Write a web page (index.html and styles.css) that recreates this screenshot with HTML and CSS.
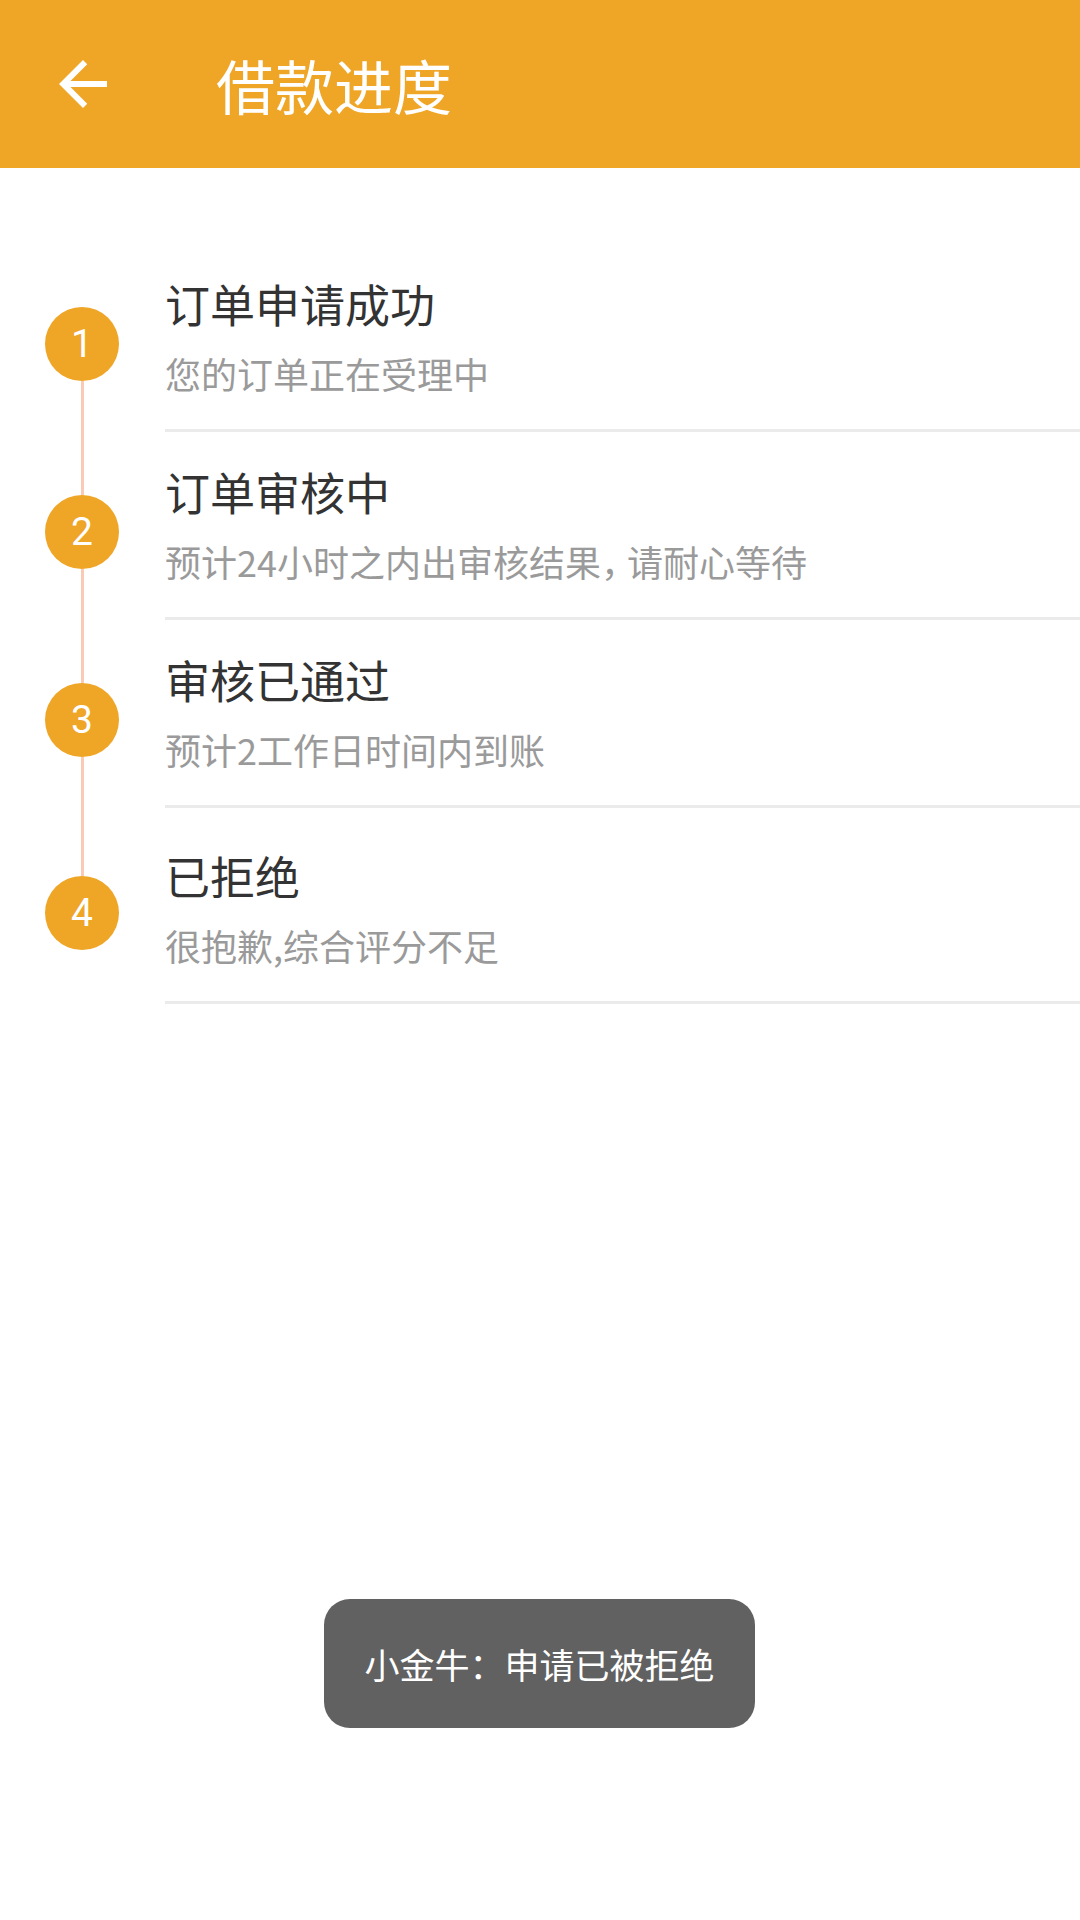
FILE: index.html
```html
<!DOCTYPE html>
<html lang="zh-CN">
<head>
    <meta charset="UTF-8">
    <meta name="viewport" content="width=device-width, initial-scale=1.0">
    <title>借款进度</title>
    <link rel="stylesheet" href="styles.css">
</head>
<body>
    <div class="toolbar">
        <svg class="back" viewBox="0 0 24 24" width="72" height="72">
            <path fill="#fff" d="M20 11H7.83l5.59-5.59L12 4l-8 8 8 8 1.41-1.41L7.83 13H20v-2z"/>
        </svg>
        <h1 class="title">借款进度</h1>
    </div>

    <div class="steps">
        <div class="step step-first">
            <div class="rail">
                <div class="line line-top"></div>
                <div class="dot">1</div>
                <div class="line line-bottom"></div>
            </div>
            <div class="info">
                <div class="step-title">订单申请成功</div>
                <div class="step-desc">您的订单正在受理中</div>
            </div>
        </div>
        <div class="step">
            <div class="rail">
                <div class="line line-top"></div>
                <div class="dot">2</div>
                <div class="line line-bottom"></div>
            </div>
            <div class="info">
                <div class="step-title">订单审核中</div>
                <div class="step-desc">预计24小时之内出审核结果<span class="comma">，</span>请耐心等待</div>
            </div>
        </div>
        <div class="step">
            <div class="rail">
                <div class="line line-top"></div>
                <div class="dot">3</div>
                <div class="line line-bottom"></div>
            </div>
            <div class="info">
                <div class="step-title">审核已通过</div>
                <div class="step-desc">预计2工作日时间内到账</div>
            </div>
        </div>
        <div class="step step-last">
            <div class="rail">
                <div class="line line-top"></div>
                <div class="dot">4</div>
                <div class="line line-bottom"></div>
            </div>
            <div class="info">
                <div class="step-title">已拒绝</div>
                <div class="step-desc">很抱歉,综合评分不足</div>
            </div>
        </div>
    </div>

    <div class="toast">小金牛：申请已被拒绝</div>
</body>
</html>
```

FILE: styles.css
```css
body {
    margin: 0;
    font-family: "Noto Sans CJK SC", Roboto, sans-serif;
    background-color: #fff;
    width: 1080px;
    height: 1920px;
    position: relative;
    overflow: hidden;
}

.toolbar {
    height: 168px;
    background-color: #efa526;
    display: flex;
    align-items: center;
}

.back {
    margin-left: 47px;
    flex: none;
}

.title {
    margin: 0 0 0 97px;
    font-size: 59px;
    font-weight: 400;
    color: #fff;
    line-height: 1;
}

.steps {
    padding-top: 76px;
}

.step {
    display: flex;
    height: 188px;
}

.step-last {
    height: 196px;
}

.rail {
    width: 165px;
    flex: none;
    display: flex;
    flex-direction: column;
    align-items: center;
    padding-right: 1px;
    box-sizing: border-box;
}

.line {
    width: 3px;
    background-color: #f9cbb6;
}

.line-top {
    height: 63px;
    flex: none;
}

.step-last .line-top {
    height: 68px;
}

.line-bottom {
    flex: 1;
}

.step-first .line-top,
.step-last .line-bottom {
    background-color: transparent;
}

.dot {
    width: 74px;
    height: 74px;
    border-radius: 50%;
    background-color: #efa526;
    color: #fff;
    font-family: Roboto, sans-serif;
    font-size: 39px;
    display: flex;
    align-items: center;
    justify-content: center;
    flex: none;
}

.info {
    flex: 1;
    box-sizing: border-box;
    border-bottom: 3px solid #ebebeb;
    padding-top: 34px;
}

.step-last .info {
    padding-top: 42px;
}

.step-title {
    font-size: 45px;
    line-height: 52px;
    color: #333;
}

.step-desc {
    margin-top: 22px;
    font-size: 36px;
    line-height: 43px;
    color: #9a9a9a;
}

.comma {
    letter-spacing: -10px;
}

.toast {
    position: absolute;
    left: 324px;
    top: 1599px;
    width: 431px;
    height: 129px;
    border-radius: 26px;
    background-color: #616161;
    color: #fff;
    font-size: 35px;
    display: flex;
    align-items: center;
    justify-content: center;
}
```
